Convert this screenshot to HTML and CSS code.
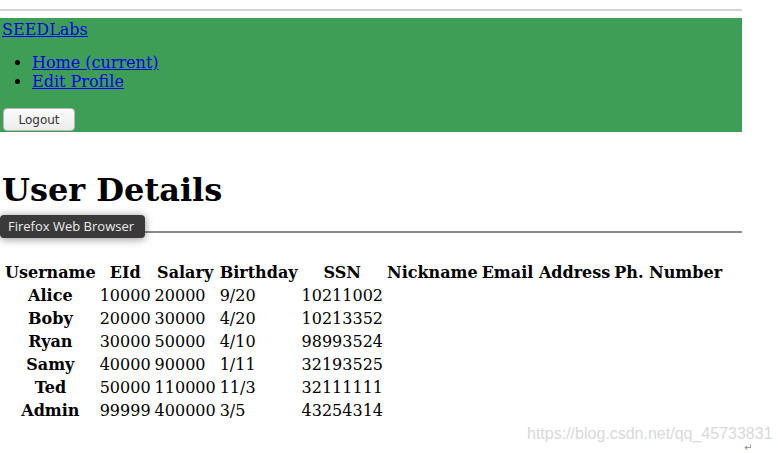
FILE: index.html
```html
<!DOCTYPE html>
<html>
<head>
<meta charset="utf-8">
<link rel="stylesheet" href="styles.css">
</head>
<body>
<div class="page">
  <div class="topline"></div>
  <div class="nav">
    <a href="#" class="brand">SEEDLabs</a>
    <ul class="menu">
      <li><a href="#">Home (current)</a></li>
      <li><a href="#">Edit Profile</a></li>
    </ul>
    <button class="logout">Logout</button>
  </div>
  <h1 class="title">User Details</h1>
  <hr class="rule">
  <table class="users">
    <thead>
      <tr><th>Username</th><th>EId</th><th>Salary</th><th>Birthday</th><th>SSN</th><th>Nickname</th><th>Email Address</th><th>Ph. Number</th></tr>
    </thead>
    <tbody>
      <tr><th>Alice</th><td>10000</td><td>20000</td><td>9/20</td><td>10211002</td><td></td><td></td><td></td></tr>
      <tr><th>Boby</th><td>20000</td><td>30000</td><td>4/20</td><td>10213352</td><td></td><td></td><td></td></tr>
      <tr><th>Ryan</th><td>30000</td><td>50000</td><td>4/10</td><td>98993524</td><td></td><td></td><td></td></tr>
      <tr><th>Samy</th><td>40000</td><td>90000</td><td>1/11</td><td>32193525</td><td></td><td></td><td></td></tr>
      <tr><th>Ted</th><td>50000</td><td>110000</td><td>11/3</td><td>32111111</td><td></td><td></td><td></td></tr>
      <tr><th>Admin</th><td>99999</td><td>400000</td><td>3/5</td><td>43254314</td><td></td><td></td><td></td></tr>
    </tbody>
  </table>
</div>
<div class="tooltip">Firefox Web Browser</div>
<div class="watermark">https://blog.csdn.net/qq_45733831</div>
<div class="corner">↵</div>
</body>
</html>
```
FILE: styles.css
```css
html, body {
  margin: 0;
  padding: 0;
  background: #ffffff;
}
body {
  font-family: "DejaVu Serif", serif;
  font-size: 16px;
  color: #000;
  position: relative;
  width: 778px;
  height: 453px;
  overflow: hidden;
}
.page {
  width: 742px;
  padding-top: 9px;
}
.topline {
  height: 2px;
  background: #d4d4d4;
}
.nav {
  margin-top: 7px;
  background: #3e9e55;
  padding: 0 0 0 2px;
  height: 114px;
}
.nav a {
  color: #0000ee;
}
.brand {
  display: block;
  width: max-content;
  line-height: 19px;
  padding-top: 2px;
}
.menu {
  margin: 14px 0 17px 0;
  padding-left: 30px;
  line-height: 19px;
}
.logout {
  display: block;
  font-family: "DejaVu Sans", sans-serif;
  font-size: 12px;
  color: #333;
  height: 23px;
  width: 72px;
  margin-left: 1px;
  background: linear-gradient(#fbfbfb, #ececec);
  border: 1px solid #b9b9b9;
  border-radius: 4px;
  padding: 0;
}
.title {
  font-size: 32px;
  margin: 40px 0 0 2px;
  line-height: 37px;
}
.rule {
  margin: 22px 0 0 0;
  border: 0;
  border-top: 2px solid #8a8a8a;
  height: 0;
}
.users {
  margin: 27px 0 0 2px;
  border-spacing: 2px;
  line-height: 19px;
}
.users th, .users td {
  padding: 1px;
}
.users td {
  text-align: left;
}
.tooltip {
  position: absolute;
  left: 0;
  top: 215px;
  width: 145px;
  height: 23px;
  box-sizing: border-box;
  background: #3a3a3a;
  color: #ececec;
  font-family: "Open Sans", "DejaVu Sans", sans-serif;
  font-size: 13px;
  line-height: 23px;
  padding-left: 8px;
  border-radius: 4px;
  box-shadow: 0 1px 8px rgba(0,0,0,0.45);
  white-space: nowrap;
}
.watermark {
  position: absolute;
  left: 527px;
  top: 425px;
  font-family: "Liberation Sans", Arial, sans-serif;
  font-size: 16px;
  line-height: 17px;
  color: #d9d9d9;
  white-space: nowrap;
}
.corner {
  position: absolute;
  left: 744px;
  top: 443px;
  font-family: "DejaVu Sans", sans-serif;
  font-size: 10px;
  line-height: 10px;
  color: #888;
}
```
